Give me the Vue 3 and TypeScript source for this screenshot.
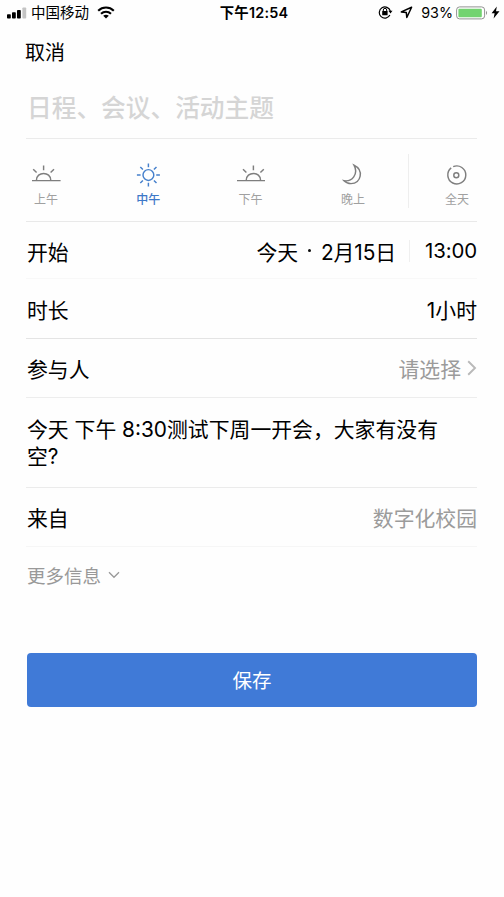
<script setup lang="ts">
import { ref } from 'vue'

type PeriodKey = 'morning' | 'noon' | 'afternoon' | 'evening' | 'allday'
interface Period {
  key: PeriodKey
  label: string
}

const periods: Period[] = [
  { key: 'morning', label: '上午' },
  { key: 'noon', label: '中午' },
  { key: 'afternoon', label: '下午' },
  { key: 'evening', label: '晚上' },
  { key: 'allday', label: '全天' },
]
const selected = ref<PeriodKey>('noon')
const title = ref('')
</script>

<template>
  <div class="screen">
    <header class="status">
      <div class="status-side">
        <svg class="signal" width="20" height="12" viewBox="0 0 20 12">
          <rect x="0" y="7.2" width="3.8" height="4.3" rx=".8" />
          <rect x="5" y="5.3" width="3.8" height="6.2" rx=".8" />
          <rect x="10" y="3.1" width="3.8" height="8.4" rx=".8" />
          <rect x="15.4" y="0.5" width="3.8" height="11" rx=".8" class="weak" />
        </svg>
        <span class="carrier">中国移动</span>
        <svg class="wifi" width="18" height="13" viewBox="0 0 18 13">
          <path d="M1.2 4.7C5.6.5 12.4.5 16.8 4.7M4 7.7c2.9-2.7 7.1-2.7 10 0" fill="none" stroke="#000" stroke-width="2.1" />
          <path d="M6.2 9.7c1.7-1.4 3.9-1.4 5.6 0L9 12.6z" />
        </svg>
      </div>
      <span class="clock">下午12:54</span>
      <div class="status-side right">
        <svg class="lock" width="15" height="14" viewBox="0 0 15 14">
          <path d="M11.9 10.1A5.6 5.6 0 1 1 12.3 6" fill="none" stroke="#000" stroke-width="1.2" />
          <path d="M10.4 5.7h4.1l-2 2.9z" />
          <rect x="4.2" y="6.1" width="5.4" height="4.2" rx=".5" />
          <path d="M5.3 6.3V5a1.7 1.7 0 0 1 3.4 0v1.3" fill="none" stroke="#000" stroke-width="1" />
        </svg>
        <svg class="locate" width="13" height="13" viewBox="0 0 13 13">
          <path d="M11.6 1.3 1.3 5.9l5 .7.5 4.9z" fill="none" stroke="#000" stroke-width="1.5" stroke-linejoin="round" />
        </svg>
        <span class="percent">93%</span>
        <svg class="battery" width="33" height="14" viewBox="0 0 33 14">
          <rect x=".6" y=".9" width="28" height="12" rx="3" fill="#fff" stroke="#929292" />
          <rect x="2.4" y="2.7" width="23.4" height="8.5" rx="1" fill="#73d370" />
          <path d="M30 4.8q2.2 2.1 0 4.2z" fill="#929292" />
        </svg>
        <svg class="bolt" width="9" height="13" viewBox="0 0 9 13">
          <path d="M5.8.5.6 7.2h3L2.6 12.6l5.9-7.3H5z" />
        </svg>
      </div>
    </header>

    <nav class="nav"><button class="cancel">取消</button></nav>

    <main class="form">
      <div class="title-row">
        <input v-model="title" class="title-input" placeholder="日程、会议、活动主题" />
      </div>

      <div class="periods">
        <button
          v-for="p in periods"
          :key="p.key"
          class="period"
          :class="[p.key, { active: selected === p.key }]"
          @click="selected = p.key"
        >
          <svg class="period-icon" width="30" height="26" viewBox="0 0 30 26">
            <path
              v-if="p.key === 'morning'"
              d="M1 18.6h28.6M5.4 18.4c0-9.3 14.4-9.3 14.4 0M12.6 3.4v4.8M2.2 7.2l3.4 3.4M23 7.2l-3.4 3.4"
            />
            <path
              v-else-if="p.key === 'afternoon'"
              d="M1 18.6h28M10.2 18.4c0-9.3 14.4-9.3 14.4 0M17.4 3.4v4.8M7 7.2l3.4 3.4M27.8 7.2l-3.4 3.4"
            />
            <g v-else-if="p.key === 'noon'">
              <circle cx="15.4" cy="13" r="5.4" />
              <path d="M15.4 1.5v3.7M15.4 20.8v3.7M3.9 13h3.7M23.2 13h3.7M7.3 4.9l2.6 2.6M20.9 18.5l2.6 2.6M7.3 21.1l2.6-2.6M20.9 7.5l2.6-2.6" />
            </g>
            <path v-else-if="p.key === 'evening'" d="M16 3.2c10 4.8 7.4 18.4-3 18.4-3 0-5.1-1-7-2.9 7.7 1.3 15-6.5 10-15.5z" />
            <g v-else>
              <path d="M9.2 5.9a9 9 0 1 0 2-1.2" />
              <circle cx="14.3" cy="13.2" r="2.5" />
            </g>
          </svg>
          <span class="period-label">{{ p.label }}</span>
        </button>
      </div>

      <div class="row start">
        <span>开始</span>
        <div class="when">
          <span class="date">今天<i class="dot"></i>2月15日</span>
          <span class="time">13:00</span>
        </div>
      </div>
      <div class="row duration"><span>时长</span><span>1小时</span></div>
      <div class="row people">
        <span>参与人</span>
        <span class="muted choose">
          请选择
          <svg width="10" height="16" viewBox="0 0 10 16"><path d="M1.2 1.3 8 8l-6.8 6.7" fill="none" stroke="#b9b9b9" stroke-width="1.9" /></svg>
        </span>
      </div>
      <p class="note">今天 下午 8:30测试下周一开会，大家有没有空?</p>
      <div class="row source"><span>来自</span><span class="muted">数字化校园</span></div>
      <button class="more">
        更多信息
        <svg width="12" height="8" viewBox="0 0 12 8"><path d="M1 1.2 6 6.3l5-5.1" fill="none" stroke="#999" stroke-width="1.3" /></svg>
      </button>
      <button class="save">保存</button>
    </main>
  </div>
</template>

<style>
body {
  background: #fff;
}
</style>

<style scoped>
.screen {
  width: 504px;
  height: 897px;
  overflow: hidden;
  background: #fefefe;
  color: #000;
  font-family: Inter, 'Noto Sans CJK SC', sans-serif;
  font-size: 20.85px;
}
button {
  border: 0;
  padding: 0;
  background: none;
  color: inherit;
  font: inherit;
}
svg {
  display: block;
  flex: none;
}
.status {
  display: grid;
  grid-template-columns: 1fr auto 1fr;
  align-items: center;
  height: 26px;
  padding: 0 5px 0 7px;
  color: #000;
  font-size: 14.5px;
  line-height: 26px;
}
.status-side {
  display: flex;
  align-items: center;
}
.right {
  justify-content: flex-end;
  margin-right: -1px;
}
.weak {
  fill: #c4c4c4;
}
.carrier {
  margin: 0 8px 0 4px;
}
.clock {
  margin-left: 2px;
  font-size: 14.4px;
  font-weight: 600;
  letter-spacing: 0.2px;
}
.lock,
.locate,
.wifi {
  position: relative;
  top: -1px;
}
.locate {
  margin: 0 8px 0 7px;
}
.percent {
  margin-right: 3px;
  font-size: 14.3px;
}
.bolt {
  position: relative;
  top: -1px;
  margin-left: 2px;
}
.nav {
  display: flex;
  align-items: center;
  height: 51px;
  padding-left: 25px;
}
.cancel {
  font-size: 20px;
}
.form {
  display: flex;
  flex-direction: column;
  padding: 0 27px 0 26px;
}
.title-row {
  display: flex;
  align-items: center;
  height: 61px;
  border-bottom: 1px solid #ebebeb;
}
.title-input {
  width: 100%;
  padding: 0 0 0 1px;
  border: 0;
  outline: 0;
  background: none;
  font: 500 24.7px/36px Inter, 'Noto Sans CJK SC', sans-serif;
}
.title-input::placeholder {
  color: #d5d5d5;
  opacity: 1;
}
.periods {
  display: flex;
  height: 54px;
  padding: 15px 0 13px;
  border-bottom: 1px solid #e9e9e9;
}
.period {
  display: flex;
  flex: none;
  flex-direction: column;
  align-items: center;
  width: 40px;
  margin-right: 62.3px;
  padding-top: 8px;
  color: #a0a0a0;
  font-size: 12px;
}
.period-icon {
  overflow: visible;
  fill: none;
  stroke: #7e7e7e;
  stroke-width: 1.45;
}
.period-label {
  margin-top: 2px;
  line-height: 19px;
}
.active {
  color: #3d78c8;
}
.active .period-icon {
  stroke: #4680cc;
}
.active .period-label {
  font-weight: 500;
}
.evening {
  margin-right: 35.1px;
}
.allday {
  box-sizing: border-box;
  width: 70px;
  margin-right: 0;
  padding-left: 27px;
  border-left: 1px solid #eee;
}
.row {
  display: flex;
  align-items: center;
  justify-content: space-between;
  box-sizing: border-box;
  padding: 0 0 0 1px;
  border-bottom: 1px solid #ededed;
}
.start {
  height: 57px;
  padding-top: 1px;
  border-color: #f8f8f8;
}
.duration {
  height: 60px;
  padding-top: 1px;
  border-color: #e4e4e4;
}
.people {
  height: 59px;
}
.source {
  height: 59px;
  border-color: #f6f6f6;
}
.when,
.date,
.choose {
  display: flex;
  align-items: center;
}
.date {
  letter-spacing: -0.1px;
}
.dot {
  width: 3px;
  height: 3px;
  margin: 0 10px;
  border-radius: 50%;
  background: #0c0c0c;
}
.time {
  margin-left: 13px;
  padding-left: 15px;
  border-left: 1px solid #efefef;
  font-size: 20.4px;
  letter-spacing: -0.1px;
  line-height: 22px;
}
.muted {
  color: #9b9b9b;
}
.choose {
  gap: 6px;
}
.note {
  box-sizing: border-box;
  height: 90px;
  margin: 0;
  padding: 18px 30px 0 1px;
  border-bottom: 1px solid #ebebeb;
  line-height: 27px;
}
.more {
  display: flex;
  align-items: center;
  gap: 7px;
  height: 56px;
  padding-left: 1px;
  color: #999;
  font-size: 18.5px;
}
.save {
  height: 54px;
  margin: 50px 0 0 1px;
  padding-bottom: 2px;
  border-radius: 4px;
  background: #407ad7;
  color: #fff;
  font-size: 19.5px;
}
</style>
